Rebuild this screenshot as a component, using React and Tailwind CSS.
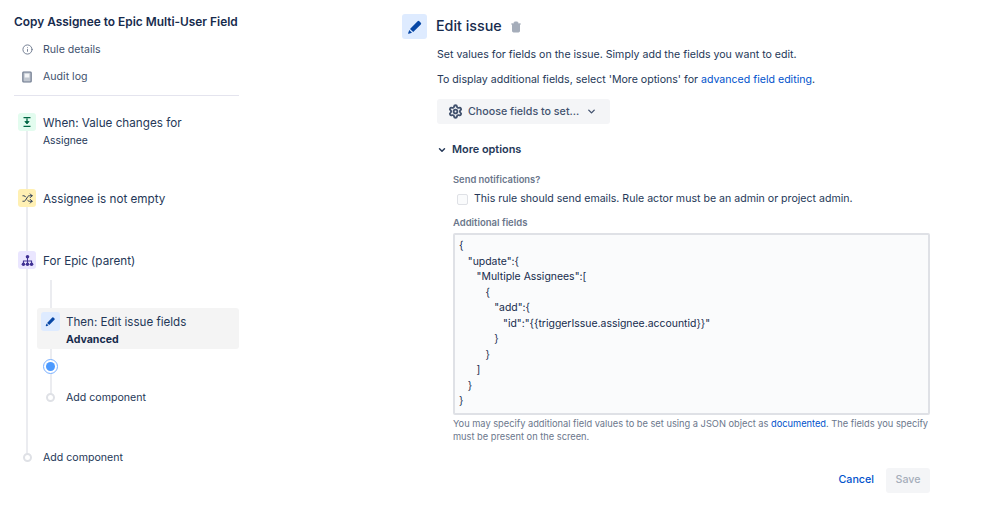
import { Info, Shuffle, Trash2, Settings, ChevronDown } from "lucide-react";

const jsonLines = [
  "{",
  '   "update":{',
  '      "Multiple Assignees":[',
  "         {",
  '            "add":{',
  '               "id":"{{triggerIssue.assignee.accountid}}"',
  "            }",
  "         }",
  "      ]",
  "   }",
  "}",
];

// Small pencil used on both "Edit issue" tiles
function PencilIcon({ className }) {
  return (
    <svg viewBox="0 0 16 16" className={className} fill="#0747a6">
      <path d="M10.6 2.2a1.2 1.2 0 0 1 1.7 0l1.5 1.5a1.2 1.2 0 0 1 0 1.7L6.2 13 3 10z" />
      <path d="M2.3 11l2.7 2.8-3.2 1c-.4.1-.8-.2-.7-.6z" />
    </svg>
  );
}

// Field value trigger icon
function ValueIcon() {
  return (
    <svg viewBox="0 0 16 16" className="w-[14px] h-[14px]" fill="none" stroke="#006644" strokeWidth="1.5">
      <path d="M4 3h8M4 13h8M8 4v6" />
      <path d="M5.6 7.5 8 10l2.4-2.5z" fill="#006644" strokeWidth="1" />
    </svg>
  );
}

// Audit log page
function LogIcon() {
  return (
    <svg viewBox="0 0 12 14" className="w-[10px] h-[12px] ml-[8px] mr-[11px]">
      <rect x="1" y="1" width="10" height="12" rx="1" fill="#c1c7d0" stroke="#6b778c" strokeWidth="1.4" />
      <rect x="3.2" y="3" width="5.6" height="4.6" fill="#f4f5f7" />
    </svg>
  );
}

// Branch rule hierarchy
function BranchIcon() {
  return (
    <svg viewBox="0 0 16 16" className="w-[13px] h-[13px]" fill="#403294">
      <circle cx="8" cy="3.4" r="2.2" />
      <circle cx="3" cy="12.6" r="2.2" />
      <circle cx="8" cy="12.6" r="2.2" />
      <circle cx="13" cy="12.6" r="2.2" />
      <path d="M8 5v7M3 12V8.5h10V12" fill="none" stroke="#403294" strokeWidth="1.3" />
    </svg>
  );
}

function Dot() {
  return <div className="w-[9px] h-[9px] rounded-full bg-white border-2 border-[#dfe1e6]" />;
}

export default function App() {
  return (
    <div className="w-[999px] h-[506px] bg-white flex font-['Inter',sans-serif] text-[#253858] overflow-hidden">
      {/* Rule sidebar */}
      <aside className="w-[225px] ml-[14px] shrink-0 flex flex-col">
        <h1 className="mt-[14px] text-[11.9px] leading-[16px] font-semibold text-[#172b4d] whitespace-nowrap">
          Copy Assignee to Epic Multi-User Field
        </h1>
        <div className="mt-[11px] flex items-center h-[16px] pt-[1px] text-[10.6px] text-[#42526e]">
          <Info className="w-[11px] h-[11px] ml-[8px] mr-[10px] text-[#6b778c]" />
          Rule details
        </div>
        <div className="mt-[11px] flex items-center h-[16px] pt-[1px] text-[10.6px] text-[#42526e]">
          <LogIcon />
          Audit log
        </div>
        <hr className="mt-[11px] border-t border-[#e4e4ee]" />

        <div className="relative mt-[17px]">
          {/* Connector lines */}
          <div className="absolute left-[12px] top-[10px] w-[2px] h-[335px] bg-[#ebecf0]" />
          <div className="absolute left-[36px] top-[167px] w-[2px] h-[117px] bg-[#ebecf0]" />

          <div className="relative flex">
            <div className="w-[18px] h-[18px] ml-[4px] rounded-[3px] bg-[#e3fcef] flex items-center justify-center">
              <ValueIcon />
            </div>
            <div className="ml-[7px] pt-[1px]">
              <div className="text-[11.7px] leading-[18px]">When: Value changes for</div>
              <div className="text-[10.3px] leading-[16px]">Assignee</div>
            </div>
          </div>

          <div className="relative flex items-center mt-[40px]">
            <div className="w-[18px] h-[18px] ml-[4px] rounded-[3px] bg-[#fff0b3] flex items-center justify-center">
              <Shuffle className="w-[11px] h-[11px] text-[#172b4d]" strokeWidth={2} />
            </div>
            <div className="ml-[7px] pt-[2px] text-[11.7px] leading-[18px]">Assignee is not empty</div>
          </div>

          <div className="relative flex items-center mt-[42px]">
            <div className="w-[18px] h-[18px] ml-[4px] rounded-[3px] bg-[#eae6ff] flex items-center justify-center">
              <BranchIcon />
            </div>
            <div className="ml-[7px] pt-[2px] text-[11.7px] leading-[18px]">For Epic (parent)</div>
          </div>

          <div className="relative ml-[23px] mt-[38px] h-[41px] rounded-[3px] bg-[#f4f4f4] flex">
            <div className="w-[19px] h-[19px] ml-[4px] mt-[4px] rounded-[3px] bg-[#deebff] flex items-center justify-center">
              <PencilIcon className="w-[11px] h-[11px]" />
            </div>
            <div className="ml-[6px] mt-[5px]">
              <div className="text-[11.6px] leading-[19px]">Then: Edit issue fields</div>
              <div className="text-[10.6px] leading-[15px] font-bold text-[#172b4d]">Advanced</div>
            </div>
          </div>

          <div className="relative ml-[29px] mt-[10px] w-[15px] h-[15px] rounded-full bg-white border-[1.5px] border-[#7ab0ff] flex items-center justify-center">
            <div className="w-[9px] h-[9px] rounded-full bg-[#4c9aff]" />
          </div>

          <div className="relative flex items-center h-[16px] mt-[15px] ml-[32px] text-[10.6px]">
            <Dot />
            <span className="ml-[11px] pt-[1px]">Add component</span>
          </div>

          <div className="relative flex items-center h-[16px] mt-[44px] ml-[9px] text-[10.6px]">
            <Dot />
            <span className="ml-[11px] pt-[1px]">Add component</span>
          </div>
        </div>
      </aside>

      {/* Component config */}
      <main className="ml-[163px] w-[528px] shrink-0 flex flex-col">
        <div className="mt-[14px] flex items-center">
          <div className="w-[25px] h-[25px] rounded-[3px] bg-[#deebff] flex items-center justify-center">
            <PencilIcon className="w-[16px] h-[16px]" />
          </div>
          <h2 className="ml-[9px] mb-[1px] text-[14.3px] font-medium text-[#172b4d]">Edit issue</h2>
          <Trash2 className="ml-[8px] w-[12px] h-[12px] text-[#a5adba]" fill="#a5adba" />
        </div>

        <div className="ml-[35px]">
          <p className="mt-[8px] text-[10.6px] leading-[16px]">
            Set values for fields on the issue. Simply add the fields you want to edit.
          </p>
          <p className="mt-[9px] text-[10.6px] leading-[16px]">
            To display additional fields, select 'More options' for{" "}
            <span className="text-[#0052cc]">advanced field editing</span>.
          </p>

          <div className="mt-[11px] w-[173px] h-[25px] rounded-[3px] bg-[#f4f5f7] flex items-center text-[10.7px] text-[#42526e] font-medium">
            <Settings className="ml-[11px] w-[15px] h-[15px] text-[#42526e]" strokeWidth={3} />
            <span className="ml-[5px] pt-[1px]">Choose fields to set...</span>
            <ChevronDown className="ml-[7px] w-[11px] h-[11px]" strokeWidth={3} />
          </div>

          <div className="mt-[17px] flex items-center h-[16px] pt-[1px] text-[10.9px] font-semibold">
            <ChevronDown className="w-[10px] h-[10px] mr-[5px] text-[#253858]" strokeWidth={3.5} />
            More options
          </div>

          <div className="ml-[16px]">
            <div className="mt-[17px] text-[9.4px] leading-[12px] font-semibold text-[#6b778c]">Send notifications?</div>
            <div className="mt-[5px] flex items-center h-[16px] text-[10.6px]">
              <div className="w-[11px] h-[11px] ml-[4px] rounded-[2px] bg-[#fafbfc] border-[1.5px] border-[#dfe1e6]" />
              <span className="ml-[6px]">This rule should send emails. Rule actor must be an admin or project admin.</span>
            </div>
            <div className="mt-[10px] text-[9.5px] leading-[12px] font-semibold text-[#6b778c]">Additional fields</div>

            <div className="mt-[4px] w-[477px] h-[182px] rounded-[2px] bg-[#fafbfc] border-2 border-[#dfe1e6] pl-[4px] pt-[3px] text-[10.45px] leading-[15.5px] text-[#172b4d] whitespace-pre">
              {jsonLines.map((line, i) => (
                <div key={i}>{line}</div>
              ))}
            </div>

            <p className="mt-[2px] w-[477px] text-[9.27px] leading-[13px] text-[#6b778c]">
              You may specify additional field values to be set using a JSON object as{" "}
              <span className="text-[#0052cc]">documented</span>. The fields you specify must be present on the screen.
            </p>

            <div className="mt-[25px] w-[477px] flex items-center justify-end text-[10.7px] font-medium">
              <span className="text-[#0052cc] mr-[12px]">Cancel</span>
              <div className="w-[44px] h-[25px] rounded-[3px] bg-[#f4f5f7] text-[#a5adba] flex items-center justify-center">
                Save
              </div>
            </div>
          </div>
        </div>
      </main>
    </div>
  );
}
